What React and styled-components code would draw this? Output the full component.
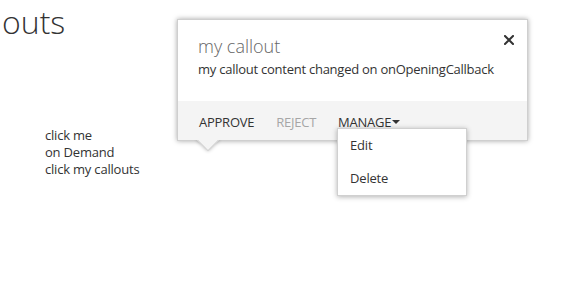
import React from 'react'
import styled, { createGlobalStyle } from 'styled-components'

const GlobalStyle = createGlobalStyle`
	html, body {
		margin: 0;
		padding: 0;
		background: #fff;
	}
	body {
		font-family: 'Open Sans', 'Noto Sans', sans-serif;
		color: #333;
		overflow: hidden;
	}
`

const Page = styled.div`
	position: relative;
	width: 578px;
	height: 284px;
	overflow: hidden;
`

const Heading = styled.h1`
	margin: 0 0 0 2px;
	font-size: 32px;
	font-weight: 300;
	line-height: 44px;
	color: #333;
	white-space: nowrap;
`

const Links = styled.div`
	margin: 83px 0 0 45px;
	display: flex;
	flex-direction: column;
	font-size: 13px;
	line-height: 17px;
	letter-spacing: -0.2px;
	color: #333;
`

const Callout = styled.div`
	position: absolute;
	left: 177px;
	top: 19px;
	z-index: 1;
	width: 349px;
	border: 1px solid #cfcfcf;
	background: #fff;
	box-shadow: 0 0 5px rgba(0, 0, 0, 0.35);
`

const Beak = styled.div`
	position: absolute;
	left: 22px;
	bottom: -8px;
	z-index: -1;
	width: 14px;
	height: 14px;
	background: #f4f4f4;
	border: 1px solid #cfcfcf;
	box-shadow: 0 0 4px rgba(0, 0, 0, 0.3);
	transform: rotate(45deg);
`

const Body = styled.div`
	padding: 15px 20px 23px 20px;
	background: #fff;
`

const Title = styled.div`
	font-size: 18px;
	font-weight: 300;
	line-height: 23px;
	color: #666;
	margin-bottom: 3px;
`

const Content = styled.div`
	font-size: 13px;
	line-height: 17px;
	letter-spacing: -0.25px;
	color: #333;
`

const CloseButton = styled.button`
	position: absolute;
	top: 15px;
	right: 13px;
	width: 10px;
	height: 10px;
	padding: 0;
	border: 0;
	background: none;
	display: flex;
	cursor: pointer;
`

const Footer = styled.div`
	position: relative;
	display: flex;
	gap: 22px;
	padding: 13px 20px 9px 21px;
	background: #f4f4f4;
`

const Action = styled.span`
	position: relative;
	font-size: 13px;
	line-height: 17px;
	letter-spacing: -0.25px;
	text-transform: uppercase;
	color: ${p => (p.$disabled ? '#a6a6a6' : '#333')};
	white-space: nowrap;
`

const Caret = styled.span`
	display: inline-block;
	width: 0;
	height: 0;
	margin: 0 0 3px 1px;
	vertical-align: middle;
	border-left: 4px solid transparent;
	border-right: 4px solid transparent;
	border-top: 4px solid #333;
`

const Menu = styled.div`
	position: absolute;
	left: -1px;
	top: 14px;
	width: 128px;
	background: #fff;
	border: 1px solid #d0d0d0;
	box-shadow: 0 1px 5px rgba(0, 0, 0, 0.3);
	text-transform: none;
`

const MenuItem = styled.div`
	padding: 0 12px;
	font-size: 13px;
	line-height: 33px;
	letter-spacing: -0.2px;
	color: #333;
`

const CloseIcon = () => (
	<svg width="10" height="10" viewBox="0 0 10 10">
		<path d="M1 1 L9 9 M9 1 L1 9" stroke="#333" strokeWidth="2" strokeLinecap="square" />
	</svg>
)

export default function App() {
	return (
		<Page>
			<GlobalStyle />
			<Heading>outs</Heading>
			<Links>
				<span>click me</span>
				<span>on Demand</span>
				<span>click my callouts</span>
			</Links>

			<Callout>
				<Body>
					<Title>my callout</Title>
					<Content>my callout content changed on onOpeningCallback</Content>
				</Body>
				<CloseButton aria-label="close">
					<CloseIcon />
				</CloseButton>
				<Footer>
					<Action>Approve</Action>
					<Action $disabled>Reject</Action>
					<Action>
						Manage
						<Caret />
						<Menu>
							<MenuItem>Edit</MenuItem>
							<MenuItem>Delete</MenuItem>
						</Menu>
					</Action>
				</Footer>
				<Beak />
			</Callout>
		</Page>
	)
}
